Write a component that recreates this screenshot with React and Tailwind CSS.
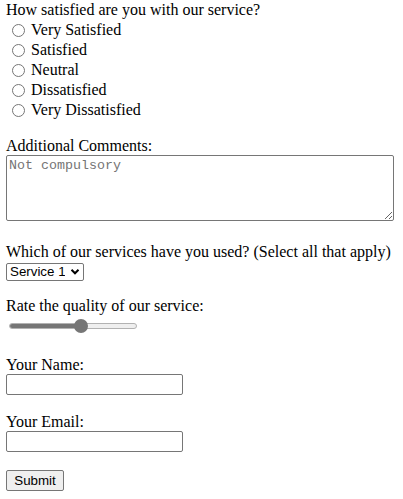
import React, { useState } from 'react';

const options = ['Very Satisfied', 'Satisfied', 'Neutral', 'Dissatisfied', 'Very Dissatisfied'];

const serif = "font-['Liberation_Serif','Times_New_Roman',serif]";
const control = "font-['Liberation_Sans',Arial,sans-serif] text-[13.33px]";

const SurveyForm = () => {
  const [rating, setRating] = useState(56);

  return (
    <form className={`${serif} text-[16px] text-black bg-white min-h-[499px] pl-[6px] flex flex-col items-start`}>
      {/* satisfaction question */}
      <div className="h-5 leading-5">How satisfied are you with our service?</div>
      {options.map((opt) => (
        <label key={opt} className="h-5 flex items-center leading-5">
          <input
            type="radio"
            name="satisfaction"
            value={opt}
            className="appearance-none w-[13px] h-[13px] ml-[6px] mr-[6px] rounded-full border border-[#767676] bg-white"
          />
          <span>{opt}</span>
        </label>
      ))}

      {/* comments */}
      <label className="mt-[17px] h-[18px] leading-[18px]">Additional Comments:</label>
      <textarea
        placeholder="Not compulsory"
        className="w-[388px] h-[66px] border border-[#767676] rounded-[2px] px-[2px] py-[2px] font-['Liberation_Mono','Courier_New',monospace] text-[13.33px] leading-[16px] placeholder:text-[#757575]"
      />

      {/* services */}
      <label className="mt-[22px] h-[18px] leading-[18px]">Which of our services have you used? (Select all that apply)</label>
      <div className="relative mt-[2px] flex">
        <select className={`${control} appearance-none w-[78px] h-[18px] leading-[16px] border border-[#767676] rounded-[2px] pl-[3px] pr-[18px] bg-white`}>
          <option>Service 1</option>
          <option>Service 2</option>
          <option>Service 3</option>
        </select>
        <svg className="absolute right-[4px] top-[5px] w-[10px] h-[8px] pointer-events-none" viewBox="0 0 10 8">
          <path d="M1.5 1.8 L5 5.3 L8.5 1.8" fill="none" stroke="#000" strokeWidth="2" />
        </svg>
      </div>

      {/* rating */}
      <label className="mt-[16px] h-[18px] leading-[18px]">Rate the quality of our service:</label>
      <div className="relative mt-[3px] ml-[3px] w-[128px] h-[15px] flex items-center">
        <div className="w-full h-[6px] rounded-full bg-[#efefef] border border-[#b2b2b2] overflow-hidden">
          <div className="h-full bg-[#767676]" style={{ width: `${rating}%` }} />
        </div>
        <div
          className="absolute top-[1px] w-[14px] h-[14px] rounded-full bg-[#767676]"
          style={{ left: `calc(${rating}% - 7px)` }}
        />
        <input
          type="range"
          min="0"
          max="100"
          value={rating}
          onChange={(e) => setRating(Number(e.target.value))}
          className="absolute inset-0 opacity-0 w-full"
        />
      </div>

      {/* name */}
      <label className="mt-[23px] h-[18px] leading-[18px]">Your Name:</label>
      <input
        type="text"
        className={`${control} w-[177px] h-[21px] border border-[#767676] rounded-[2px] px-[2px]`}
      />

      {/* email */}
      <label className="mt-[18px] h-[18px] leading-[18px]">Your Email:</label>
      <input
        type="email"
        className={`${control} w-[177px] h-[21px] border border-[#767676] rounded-[2px] px-[2px]`}
      />

      <button
        type="submit"
        className={`${control} mt-[18px] w-[58px] h-[21px] bg-[#efefef] border border-[#767676] rounded-[2px] text-black`}
      >
        Submit
      </button>
    </form>
  );
};

export default function App() {
  return <SurveyForm />;
}
